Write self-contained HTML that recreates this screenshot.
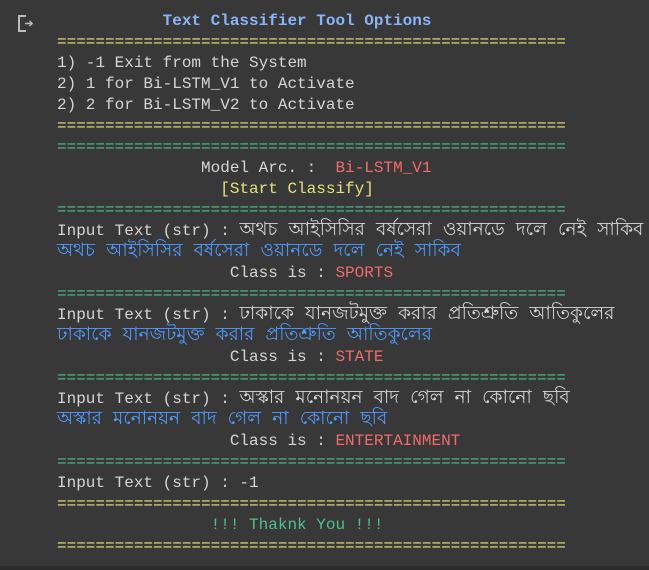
<!DOCTYPE html>
<html><head><meta charset="utf-8"><style>
html,body{margin:0;padding:0;background:#383838;width:649px;height:570px;overflow:hidden}
pre{position:absolute;left:57px;top:11px;margin:0;font-family:"Liberation Mono",monospace;font-size:16px;line-height:21px;color:#d5d5d5;white-space:pre}
.t{color:#8ab4f8;font-weight:bold}
.y{color:#e6e27a}
.g{color:#4fc08a}
.r{color:#f26b6b}
.b{color:#4f9bff}
.s{color:#e6e27a}
.bn{font-size:18.5px;line-height:0}
.bot{position:absolute;left:0;top:566px;width:649px;height:4px;background:#2b2b2b}
</style></head><body>
<svg style="position:absolute;left:17px;top:14px" width="20" height="20" viewBox="0 0 20 20"><path d="M9 2H2v15h7" fill="none" stroke="#bdbdbd" stroke-width="2"/><path d="M8 9.5h7M12.5 7l2.5 2.5-2.5 2.5" fill="none" stroke="#bdbdbd" stroke-width="1.5"/></svg>
<pre><span class="t">           Text Classifier Tool Options</span>
<span class="y">=====================================================</span>
1) -1 Exit from the System
2) 1 for Bi-LSTM_V1 to Activate
2) 2 for Bi-LSTM_V2 to Activate
<span class="y">=====================================================</span>
<span class="g">=====================================================</span>
               Model Arc. :  <span class="r">Bi-LSTM_V1</span>
                 <span class="s">[Start Classify]</span>
<span class="g">=====================================================</span>
Input Text (str) : <span class="bn">অথচ আইসিসির বর্ষসেরা ওয়ানডে দলে নেই সাকিব</span>
<span class="b bn">অথচ আইসিসির বর্ষসেরা ওয়ানডে দলে নেই সাকিব</span>
                  Class is : <span class="r">SPORTS</span>
<span class="g">=====================================================</span>
Input Text (str) : <span class="bn">ঢাকাকে যানজটমুক্ত করার প্রতিশ্রুতি আতিকুলের</span>
<span class="b bn">ঢাকাকে যানজটমুক্ত করার প্রতিশ্রুতি আতিকুলের</span>
                  Class is : <span class="r">STATE</span>
<span class="g">=====================================================</span>
Input Text (str) : <span class="bn">অস্কার মনোনয়ন বাদ গেল না কোনো ছবি</span>
<span class="b bn">অস্কার মনোনয়ন বাদ গেল না কোনো ছবি</span>
                  Class is : <span class="r">ENTERTAINMENT</span>
<span class="g">=====================================================</span>
Input Text (str) : -1
<span class="y">=====================================================</span>
                <span class="g">!!! Thaknk You !!!</span>
<span class="y">=====================================================</span></pre>
<div class="bot"></div>
</body></html>
